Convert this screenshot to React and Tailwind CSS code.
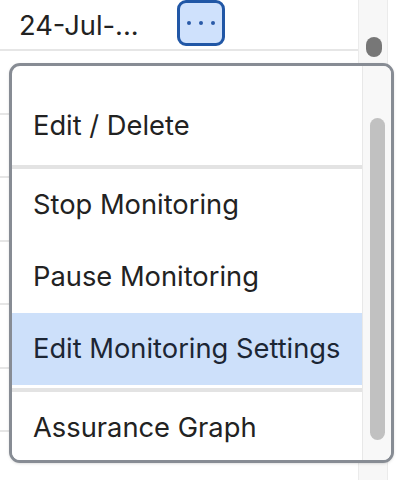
import { useState } from "react";

const items = [
  { label: "Edit / Delete", sep: true, first: true },
  { label: "Stop Monitoring" },
  { label: "Pause Monitoring" },
  { label: "Edit Monitoring Settings", active: true, sep: true },
  { label: "Assurance Graph" },
];

function MenuItem({ label, active, first }) {
  return (
    <div
      className={`flex shrink-0 items-center pl-[21px] ${
        first ? "h-[75px] pb-[3px]" : "h-[72px]"
      } ${active ? "bg-[#cde0fa] text-[#1c2634]" : "bg-white text-[#222]"}`}
    >
      {label}
    </div>
  );
}

export default function App() {
  const [open] = useState(true);
  const rows = [0, 1, 2, 3, 4, 5, 6];

  return (
    <div
      className="relative h-[480px] w-[406px] overflow-hidden bg-white text-[27.3px]"
      style={{ fontFamily: "Inter, 'Noto Sans', sans-serif" }}
    >
      <div className="flex h-full">
        {/* table rows */}
        <div className="flex w-[358px] flex-col">
          <div className="flex h-[51px] shrink-0 border-b-2 border-[#e6e6e6]">
            <div className="w-[177px] pl-[19px] pt-[10px] leading-[32px] text-[#222]">
              24-Jul-...
            </div>
            <button className="flex h-[46px] w-[48px] items-center justify-center gap-[8px] rounded-[9px] border-[3px] border-[#2157a6] bg-[#cfe1fc]">
              <span className="h-[4px] w-[4px] rounded-full bg-[#2a5aa8]" />
              <span className="h-[4px] w-[4px] rounded-full bg-[#2a5aa8]" />
              <span className="h-[4px] w-[4px] rounded-full bg-[#2a5aa8]" />
            </button>
          </div>
          {rows.map((r) => (
            <div
              key={r}
              className="h-[63.5px] shrink-0 border-b-2 border-[#e6e6e6]"
            />
          ))}
        </div>

        {/* page scrollbar */}
        <div className="w-[30px] border-x border-[#ebebeb] bg-[#f7f7f7] pt-[37px]">
          <div className="ml-[7px] h-[20px] w-[16px] rounded-full bg-[#777]" />
        </div>
      </div>

      {/* dropdown menu */}
      {open && (
        <div className="absolute left-[9px] top-[63px] flex h-[400px] w-[385px] overflow-hidden rounded-[11px] border-[3px] border-[#878c94] bg-white shadow-sm">
          <div className="flex flex-1 flex-col pt-[24px]">
            {items.map((it) => (
              <div key={it.label} className="flex flex-col">
                <MenuItem label={it.label} active={it.active} first={it.first} />
                {it.sep && (
                  <div
                    className={`h-[4px] shrink-0 bg-[#e3e3e3] ${
                      it.active ? "mt-[3px]" : ""
                    }`}
                  />
                )}
              </div>
            ))}
          </div>
          <div className="w-[29px] shrink-0 border-l border-[#e8e8e8] bg-[#f8f8f8] pt-[52px]">
            <div className="ml-[7px] h-[322px] w-[15px] rounded-full bg-[#c1c1c1]" />
          </div>
        </div>
      )}
    </div>
  );
}
